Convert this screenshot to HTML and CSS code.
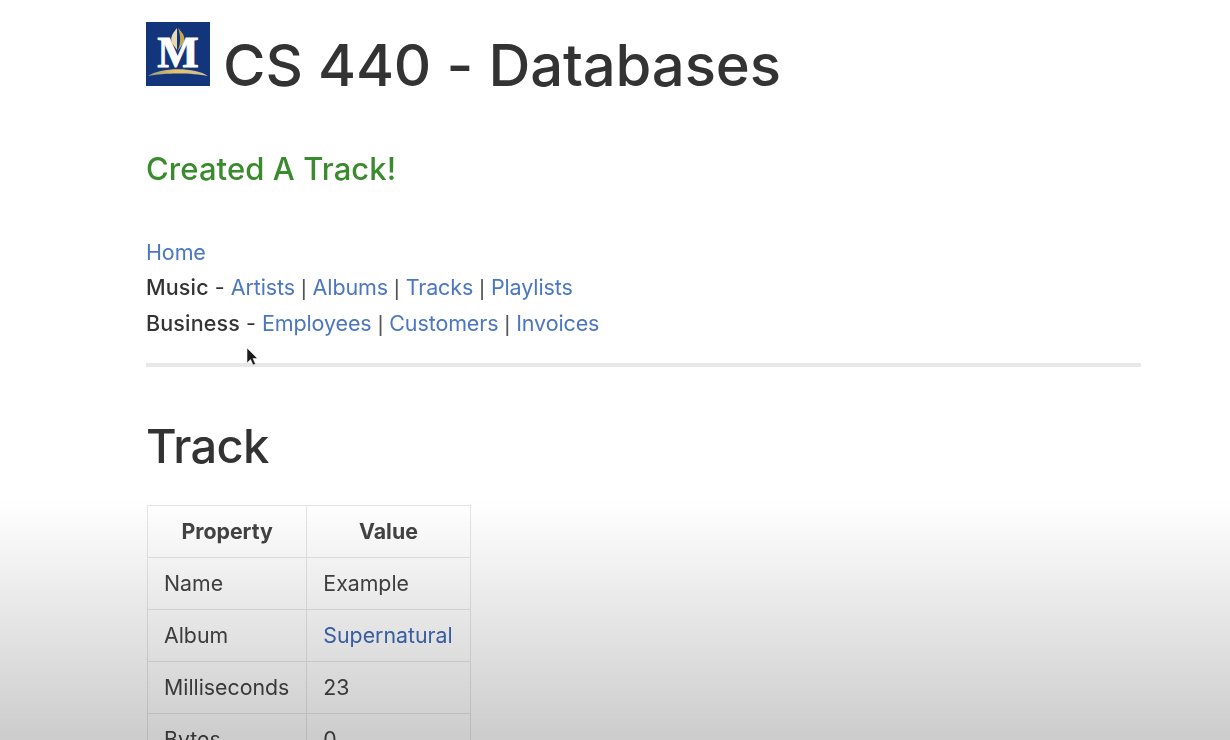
FILE: index.html
```html
<!DOCTYPE html>
<html lang="en">
<head>
<meta charset="utf-8">
<title>CS 440 - Databases</title>
<link rel="stylesheet" href="styles.css">
</head>
<body>
<main class="page">
  <header class="title-row">
    <svg class="logo" viewBox="0 0 64 64" width="64" height="64" aria-label="Logo">
      <defs>
        <linearGradient id="gold" x1="0" y1="0" x2="1" y2="0"><stop offset="0" stop-color="#8f9a78"/><stop offset=".45" stop-color="#e8c26c"/><stop offset="1" stop-color="#c9bd96"/></linearGradient>
      </defs>
      <rect width="64" height="64" fill="#12357b"/>
      <path d="M31 6 C26 12 24 16 26 21 L31 28Z" fill="#e9dcb2"/>
      <path d="M32 6 C38 12 40 16 37 22 L31 30 C35 23 35 13 32 6Z" fill="#c9a44f"/>
      <text class="logo-m" x="32" y="45" text-anchor="middle">M</text>
      <path d="M2 54 C14 45 50 45 62 54 C46 50.500 18 50.500 2 54Z" fill="url(#gold)"/>
    </svg>
    <h1 class="title">CS 440 - Databases</h1>
  </header>
  <p class="flash">Created A Track!</p>
  <nav class="nav">
    <div class="nav-line"><a href="#">Home</a></div>
    <div class="nav-line"><span class="label">Music</span> - <a href="#">Artists</a> <span class="sep">|</span> <a href="#">Albums</a> <span class="sep">|</span> <a href="#">Tracks</a> <span class="sep">|</span> <a href="#">Playlists</a></div>
    <div class="nav-line"><span class="label">Business</span> - <a href="#">Employees</a> <span class="sep">|</span> <a href="#">Customers</a> <span class="sep">|</span> <a href="#">Invoices</a></div>
  </nav>
  <hr class="rule">
  <h2 class="heading">Track</h2>
  <table class="props">
    <thead><tr><th>Property</th><th>Value</th></tr></thead>
    <tbody>
      <tr><td>Name</td><td>Example</td></tr>
      <tr><td>Album</td><td><a href="#">Supernatural</a></td></tr>
      <tr><td>Milliseconds</td><td>23</td></tr>
      <tr><td>Bytes</td><td>0</td></tr>
    </tbody>
  </table>
</main>
<svg class="cursor" viewBox="0 0 14 22" width="14" height="22" aria-hidden="true"><path d="M1 1 L1 16 L4.500 12.500 L7 18 L9.500 17 L7 11.500 L11.500 11.500Z" fill="#1c1c1c" stroke="#eee" stroke-width=".6"/></svg>
<div class="fade"></div>
</body>
</html>
```
FILE: styles.css
```css
html, body { margin: 0; height: 100%; overflow: hidden; background: #fff; }
body { font-family: Inter, "Liberation Sans", sans-serif; color: #333; }
.page { width: 995px; padding: 22px 0 0 146px; filter: blur(.45px); }
.title-row { display: flex; align-items: flex-start; gap: 13px; height: 84px; }
.logo { display: block; flex: none; }
.logo-m { font-family: "Liberation Serif", serif; font-weight: 700; font-size: 44px; fill: #fff; stroke: #fff; stroke-width: .8px; }
.title { margin: 10px 0 0; font-size: 58px; line-height: 66px; font-weight: 450; letter-spacing: -.15px; color: #333; }
.flash { margin: 43px 0 0; font-size: 31px; line-height: 40px; font-weight: 450; letter-spacing: .08px; color: #3a8a2e; }
.nav { margin-top: 46px; font-size: 21.500px; line-height: 35px; color: #333; }
.label { font-weight: 500; letter-spacing: .15px; }
.sep { font-family: "Liberation Sans", sans-serif; color: #555; }
.nav a, .props a { color: #4a76c2; text-decoration: none; }
.nav a { letter-spacing: -.12px; }
.rule { margin: 21px 0 0; height: 4px; border: 0; background: #e8e8e8; }
.heading { margin: 51px 0 0; font-size: 47px; line-height: 56px; font-weight: 450; letter-spacing: -.7px; color: #333; }
.props { margin: 31px 0 0 1px; border-collapse: collapse; font-size: 21.300px; color: #444; }
.props th, .props td { border: 1px solid #e6e6e6; height: 52px; padding: 0 17px 2px 16px; box-sizing: border-box; }
.props th { text-align: center; font-weight: 700; padding: 0 16px 2px; }
.props td { text-align: left; }
.props a { color: #3f69b5; }
.cursor { position: absolute; left: 246px; top: 347px; }
.fade { position: fixed; left: 0; right: 0; top: 500px; bottom: 0; pointer-events: none; background: linear-gradient(to bottom, rgba(0,0,0,0), rgba(0,0,0,.2)); }
```
